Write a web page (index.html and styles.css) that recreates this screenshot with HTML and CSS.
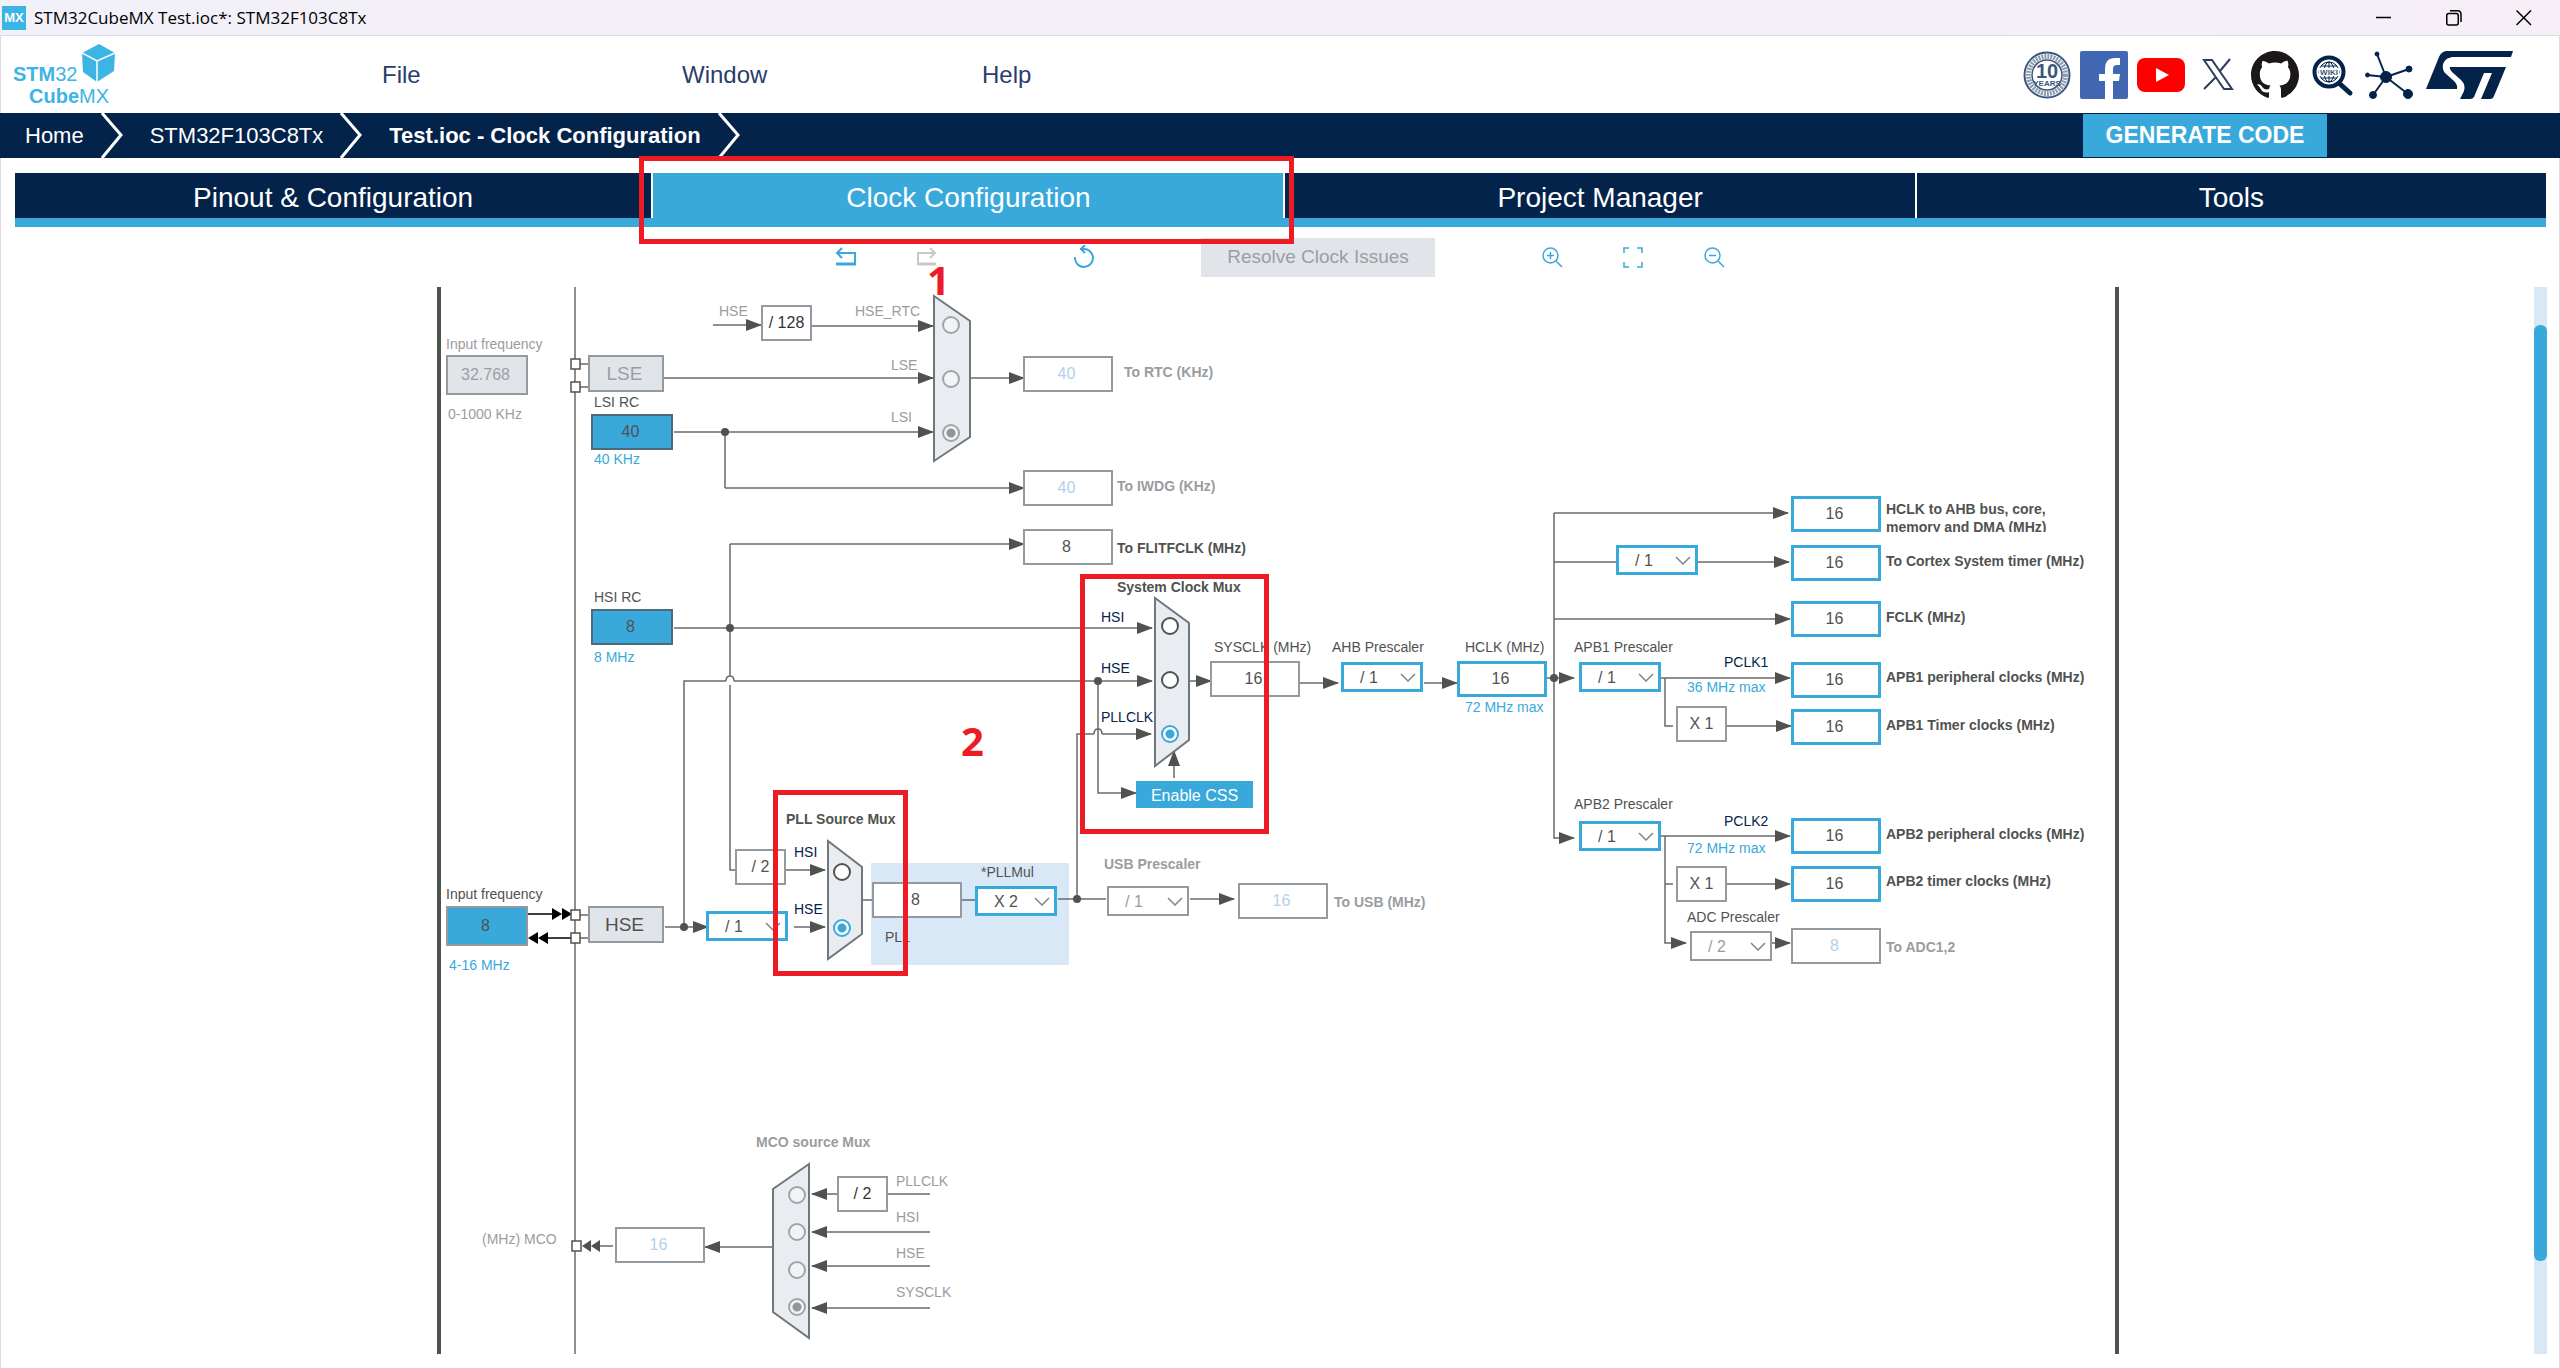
FILE: index.html
```html
<!DOCTYPE html>
<html lang="en">
<head>
<meta charset="utf-8">
<title>STM32CubeMX Test.ioc*: STM32F103C8Tx</title>
<link rel="stylesheet" href="styles.css">
</head>
<body>
<div class="app">
  <header class="titlebar">
    <span class="app-icon">MX</span>
    <span class="app-title">STM32CubeMX Test.ioc*: STM32F103C8Tx</span>
    <div class="window-controls">
      <button type="button" aria-label="Minimize"><svg width="16" height="16" viewBox="0 0 16 16"><path d="M0 7.500H15"/></svg></button>
      <button type="button" aria-label="Restore"><svg width="16" height="16" viewBox="0 0 16 16"><rect x=".75" y="3.500" width="11.500" height="11.500" rx="2"/><path d="M4 .75H11.500Q15 .75 15 4.500V12"/></svg></button>
      <button type="button" aria-label="Close"><svg width="16" height="16" viewBox="0 0 16 16"><path d="M.5 .5L15 15M15 .5L.5 15"/></svg></button>
    </div>
  </header>

  <div class="menubar">
    <div class="logo">
      <span class="logo-top"><b>STM</b>32</span>
      <span class="logo-bottom"><b>Cube</b>MX</span>
      <svg class="logo-cube" width="34" height="38" viewBox="0 0 34 38"><path fill="#3cb4e6" d="M17 0L33 9L32 27L15 38L1 28L0 9Z"/><path d="M0 9L15 17L33 9M15 17V38" fill="none" stroke="#fff" stroke-width="1.500"/></svg>
    </div>
    <nav class="menu" aria-label="Main menu">
      <button type="button">File</button>
      <button type="button">Window</button>
      <button type="button">Help</button>
    </nav>
    <div class="links">
      <a href="#years" aria-label="10 years">
        <svg width="48" height="48" viewBox="0 0 48 48"><circle cx="24" cy="24" r="22.500" fill="none" stroke="#3b577b" stroke-width="2"/><circle cx="24" cy="24" r="18.500" fill="none" stroke="#8a9cb2" stroke-width="5" stroke-dasharray="2 1"/><circle cx="24" cy="24" r="15" fill="#fff" stroke="#3b577b" stroke-width="1.500"/><text x="24" y="27" class="badge-num">10</text><text x="24" y="35" class="badge-word">YEARS</text></svg>
      </a>
      <a href="#facebook" aria-label="Facebook">
        <svg width="48" height="48" viewBox="0 0 48 48"><rect width="48" height="48" rx="2" fill="#4267b2"/><path fill="#fff" d="M25 48V30H19V23H25V18Q25 7 35 7H40V14H37Q33 14 33 18V23H40L39 30H33V48Z"/></svg>
      </a>
      <a href="#youtube" aria-label="YouTube">
        <svg width="48" height="48" viewBox="0 0 48 48"><rect y="7" width="48" height="34" rx="8" fill="#f00"/><path fill="#fff" d="M19 17L32 24L19 31Z"/></svg>
      </a>
      <a href="#x" aria-label="X">
        <svg width="48" height="48" viewBox="0 0 48 48" fill="none" stroke="#2b3f60" stroke-width="2"><path d="M10 9H18L38 38H30ZM36 8L26 20M22 26L10 38"/></svg>
      </a>
      <a href="#github" aria-label="GitHub">
        <svg width="48" height="48" viewBox="0 0 16 16"><path fill="#1b1817" d="M8 0C3.580 0 0 3.580 0 8c0 3.540 2.290 6.530 5.470 7.590.4.070.55-.17.55-.38 0-.19-.01-.82-.01-1.490-2.010.37-2.530-.49-2.690-.94-.09-.23-.48-.94-.82-1.130-.28-.15-.68-.52-.01-.53.63-.01 1.080.58 1.230.82.72 1.210 1.870.87 2.330.66.070-.52.28-.87.51-1.070-1.780-.2-3.640-.89-3.640-3.950 0-.87.31-1.590.82-2.150-.08-.2-.36-1.020.08-2.120 0 0 .67-.21 2.200.82.64-.18 1.320-.27 2-.27s1.360.09 2 .27c1.530-1.040 2.200-.82 2.200-.82.44 1.100.16 1.920.08 2.120.51.56.82 1.270.82 2.150 0 3.070-1.870 3.750-3.650 3.950.29.25.54.73.54 1.480 0 1.070-.01 1.930-.01 2.200 0 .21.15.46.55.38A8.010 8.010 0 0 0 16 8c0-4.420-3.580-8-8-8z"/></svg>
      </a>
      <a href="#wiki" aria-label="Wiki">
        <svg width="48" height="48" viewBox="0 0 48 48" fill="none" stroke="#03234b"><circle cx="21" cy="21" r="14.500" stroke-width="4"/><path stroke-width="5" stroke-linecap="round" d="M32 33L42 42"/><circle cx="21" cy="21" r="10" stroke-width="1"/><ellipse cx="21" cy="21" rx="5" ry="10"/><path d="M21 11V31M13 15H29M13 27H29"/><rect x="11" y="17" width="20" height="8" fill="#fff" stroke="none"/><text x="21" y="24" class="badge-word">WIKI</text></svg>
      </a>
      <a href="#community" aria-label="Community">
        <svg width="48" height="48" viewBox="0 0 48 48" fill="#03234b" stroke="#03234b"><path d="M21 26L12 3M21 26L2 24M21 26L44 18M21 26L8 44M21 26L43 43" stroke-width="2"/><circle cx="21" cy="26" r="5.500"/><circle cx="12" cy="3" r="2"/><circle cx="2.500" cy="24" r="2"/><circle cx="44" cy="18" r="3"/><circle cx="8" cy="44" r="3.500"/><circle cx="43" cy="43" r="4.500"/></svg>
      </a>
      <a class="st" href="#st" aria-label="STMicroelectronics">
        <svg width="88" height="48" viewBox="0 0 88 48" fill="#03234b"><path d="M20 0H87L85 6H28C18 6 14 15 19 22L28 30Q32 34 31 38H0L13 6Q15 1 20 0Z"/><path d="M24 16H80L68 45Q67 48 64 48H55L66 22H58L48 46Q47 48 44 48H34L38 40Q40 34 35 29L26 21Q23 17 24 16Z"/></svg>
      </a>
    </div>
  </div>

  <div class="crumbbar">
    <nav class="crumbs" aria-label="Breadcrumb">
      <a href="#home">Home</a><svg width="22" height="45" viewBox="0 0 22 45"><path d="M1 0L20 22L1 45"/></svg>
      <a href="#mcu">STM32F103C8Tx</a><svg width="22" height="45" viewBox="0 0 22 45"><path d="M1 0L20 22L1 45"/></svg>
      <a class="current" href="#clock">Test.ioc - Clock Configuration</a><svg width="22" height="45" viewBox="0 0 22 45"><path d="M1 0L20 22L1 45"/></svg>
    </nav>
    <button type="button" class="generate">GENERATE CODE</button>
  </div>

  <nav class="tabs" aria-label="Views">
    <button type="button">Pinout &amp; Configuration</button>
    <button type="button" class="active">Clock Configuration<span class="mark mark-tab"></span></button>
    <button type="button">Project Manager</button>
    <button type="button">Tools</button>
  </nav>

  <div class="toolbar">
    <div class="tools">
      <button type="button" aria-label="Undo"><svg width="22" height="24" viewBox="0 0 22 24"><path d="M2 8H20V18" stroke-width="2"/><path d="M1 19H21" stroke-width="3"/><path d="M7 3L2 8L7 13" stroke-width="2"/></svg></button>
      <button type="button" aria-label="Redo" disabled><svg width="22" height="24" viewBox="0 0 22 24"><path d="M19 8H2V18" stroke-width="2"/><path d="M1 19H20" stroke-width="3"/><path d="M14 3L19 8L14 13" stroke-width="2"/></svg></button>
      <button type="button" class="reset" aria-label="Reset"><svg width="22" height="24" viewBox="0 0 22 24"><path d="M2 12A9 9 0 1 0 10 4H7" stroke-width="2"/><path d="M12 0L8 4L12 8" stroke-width="2"/></svg></button>
    </div>
    <button type="button" class="resolve" disabled>Resolve Clock Issues</button>
    <div class="tools">
      <button type="button" aria-label="Zoom in"><svg width="22" height="24" viewBox="0 0 22 24"><circle cx="9.500" cy="10.500" r="7.500"/><path d="M15 16L21 22M6 10.500H13M9.500 7V14"/></svg></button>
      <button type="button" aria-label="Fit"><svg width="22" height="24" viewBox="0 0 22 24"><path d="M2 8V3H7M15 3H20V8M20 17V22H15M7 22H2V17"/></svg></button>
      <button type="button" aria-label="Zoom out"><svg width="22" height="24" viewBox="0 0 22 24"><circle cx="9.500" cy="10.500" r="7.500"/><path d="M15 16L21 22M6 10.500H13"/></svg></button>
    </div>
  </div>

  <main class="workspace">
    <div class="canvas">
      <svg class="wires" width="1760" height="1080" viewBox="0 0 1760 1080">
        <defs>
          <marker id="arrow" markerUnits="userSpaceOnUse" markerWidth="16" markerHeight="12" refX="15" refY="6" orient="auto"><path d="M0 0L16 6L0 12Z" fill="#505250"/></marker>
        </defs>
        <path class="frame" d="M39 7V1074M1717 7V1074"/>
        <rect class="pll" x="471" y="583" width="198" height="102"/>
        <path class="wire" d="M175 7V1074M180 84H188M180 107H188M180 635H188M180 658H188
          M274 152H325M325 152V208M274 348H330M330 264V396M330 405V590H336
          M284 647V401H326M326 401Q326 396 330 396Q334 396 334 401M334 401H698
          M677 619V454H694M694 454Q694 449 698 449Q702 449 702 454
          M462 620H472M561 620H575M658 619H706
          M1154 233V398M1146 398H1154M1154 282H1216
          M1265 398V446H1273M1265 604H1273M1261 556H1265M488 914H530M200 966H213"/>
        <g class="wire arrows">
          <path d="M313 45H361"/><path d="M412 46H533"/><path d="M263 98H533"/><path d="M325 152H533"/>
          <path d="M570 98H624"/><path d="M325 208H624"/><path d="M330 264H624"/>
          <path d="M330 348H752"/><path d="M698 401H752"/><path d="M702 454H751"/><path d="M698 401V513H736"/><path d="M774 498V471"/>
          <path d="M789 401H811"/><path d="M899 403H938"/><path d="M1024 403H1057"/><path d="M790 619H834"/>
          <path d="M1154 233H1388"/><path d="M1298 282H1389"/><path d="M1154 339H1390"/><path d="M1154 398H1174"/>
          <path d="M1261 398H1390"/><path d="M1327 446H1391"/><path d="M1154 398V558H1174"/>
          <path d="M1265 556H1390"/><path d="M1327 604H1390"/><path d="M1265 556V663H1286"/><path d="M1372 663H1390"/>
          <path d="M386 590H425"/><path d="M265 647H308"/><path d="M394 647H425"/>
          <path d="M373 967H305"/><path d="M437 914H412"/><path d="M530 952H412"/><path d="M530 986H412"/><path d="M530 1028H412"/>
        </g>
        <g class="dots"><circle cx="325" cy="152" r="4"/><circle cx="330" cy="348" r="4"/><circle cx="284" cy="647" r="4"/><circle cx="698" cy="401" r="4"/><circle cx="677" cy="619" r="4"/><circle cx="1154" cy="398" r="4"/></g>
        <g class="osc"><path d="M128 634H152M147 658H171"/><path class="head" d="M152 628L162 634L152 640ZM162 628L172 634L162 640ZM138 652L128 658L138 664ZM148 652L138 658L148 664Z"/></g>
        <path class="dots" d="M191 960L182 966L191 972ZM200 960L191 966L200 972Z"/>
        <g class="pins"><rect x="171" y="79" width="9" height="10"/><rect x="171" y="102" width="9" height="10"/><rect x="171" y="630" width="9" height="10"/><rect x="171" y="653" width="9" height="10"/><rect x="172" y="961" width="9" height="10"/></g>
        <g class="muxes">
          <path d="M534 16L570 41V157L534 181Z"/>
          <path d="M755 318L789 343V460L755 486Z"/>
          <path d="M428 561L462 587V654L428 679Z"/>
          <path d="M409 884L373 909V1032L409 1058Z"/>
        </g>
      </svg>

      <!-- low speed sources -->
      <label class="text muted lse-in-label" for="lse-in">Input frequency</label>
      <input class="field source off lse-in" id="lse-in" value="32.768" disabled>
      <span class="text muted lse-range">0-1000 KHz</span>
      <button type="button" class="osc-button lse" disabled>LSE</button>
      <label class="text lsi-label" for="lsi">LSI RC</label>
      <input class="field source lsi" id="lsi" value="40" readonly>
      <span class="text blue lsi-freq">40 KHz</span>

      <!-- RTC mux -->
      <span class="text muted rtc-hse">HSE</span>
      <span class="factor dark div128">/ 128</span>
      <label class="text muted rtc-hse-div" for="rtc1">HSE_RTC</label>
      <label class="text muted rtc-lse" for="rtc2">LSE</label>
      <label class="text muted rtc-lsi" for="rtc3">LSI</label>
      <input type="radio" class="rtc1" id="rtc1" name="rtc" disabled>
      <input type="radio" class="rtc2" id="rtc2" name="rtc" disabled>
      <input type="radio" class="rtc3" id="rtc3" name="rtc" checked disabled>
      <input class="field idle rtc" id="rtc" value="40" disabled>
      <label class="text bold muted rtc-label" for="rtc">To RTC (KHz)</label>
      <input class="field idle iwdg" id="iwdg" value="40" disabled>
      <label class="text bold muted iwdg-label" for="iwdg">To IWDG (KHz)</label>
      <input class="field flitf" id="flitf" value="8" readonly>
      <label class="text bold flitf-label" for="flitf">To FLITFCLK (MHz)</label>

      <!-- high speed sources -->
      <label class="text hsi-label" for="hsi">HSI RC</label>
      <input class="field source hsi" id="hsi" value="8" readonly>
      <span class="text blue hsi-freq">8 MHz</span>
      <label class="text hse-in-label" for="hse-in">Input frequency</label>
      <input class="field source hse-in" id="hse-in" value="8">
      <span class="text blue hse-range">4-16 MHz</span>
      <button type="button" class="osc-button hse">HSE</button>
      <select class="pick hse-div" aria-label="HSE prescaler"><option>/ 1</option></select>
      <span class="factor div2">/ 2</span>

      <!-- PLL -->
      <span class="text bold pll-title">PLL Source Mux</span>
      <label class="text navy pll-hsi" for="pll1">HSI</label>
      <label class="text navy pll-hse" for="pll2">HSE</label>
      <input type="radio" class="pll1" id="pll1" name="pll">
      <input type="radio" class="pll2" id="pll2" name="pll" checked>
      <input class="field pll-in" id="pll-in" value="8" readonly>
      <label class="text pll-mul-label" for="pll-mul">*PLLMul</label>
      <select class="pick pll-mul" id="pll-mul"><option>X 2</option></select>
      <label class="text pll-name" for="pll-in">PLL</label>

      <!-- system clock mux -->
      <span class="text bold sys-title">System Clock Mux</span>
      <label class="text navy sys-hsi" for="sys1">HSI</label>
      <label class="text navy sys-hse" for="sys2">HSE</label>
      <label class="text navy sys-pll" for="sys3">PLLCLK</label>
      <input type="radio" class="sys1" id="sys1" name="sys">
      <input type="radio" class="sys2" id="sys2" name="sys">
      <input type="radio" class="sys3" id="sys3" name="sys" checked>
      <button type="button" class="css-button">Enable CSS</button>
      <label class="text sysclk-label" for="sysclk">SYSCLK (MHz)</label>
      <input class="field sysclk" id="sysclk" value="16" readonly>
      <label class="text ahb-label" for="ahb">AHB Prescaler</label>
      <select class="pick ahb" id="ahb"><option>/ 1</option></select>
      <label class="text hclk-label" for="hclk">HCLK (MHz)</label>
      <input class="field on hclk" id="hclk" value="16">
      <span class="text blue hclk-max">72 MHz max</span>

      <!-- USB -->
      <label class="text bold muted usb-div-label" for="usb-div">USB Prescaler</label>
      <select class="pick usb-div" id="usb-div" disabled><option>/ 1</option></select>
      <input class="field idle usb" id="usb" value="16" disabled>
      <label class="text bold muted usb-label" for="usb">To USB (MHz)</label>

      <!-- core outputs -->
      <input class="field on out ahb-bus" id="ahb-bus" value="16">
      <label class="text bold out-label ahb-bus-label" for="ahb-bus">HCLK to AHB bus, core,<br>memory and DMA (MHz)</label>
      <select class="pick cortex-div" aria-label="Cortex prescaler"><option>/ 1</option></select>
      <input class="field on out cortex" id="cortex" value="16">
      <label class="text bold out-label cortex-label" for="cortex">To Cortex System timer (MHz)</label>
      <input class="field on out fclk" id="fclk" value="16">
      <label class="text bold out-label fclk-label" for="fclk">FCLK (MHz)</label>

      <!-- APB1 -->
      <label class="text apb1-label" for="apb1">APB1 Prescaler</label>
      <select class="pick apb1" id="apb1"><option>/ 1</option></select>
      <span class="text navy pclk1">PCLK1</span>
      <span class="text blue pclk1-max">36 MHz max</span>
      <span class="factor x1-apb1">X 1</span>
      <input class="field on out apb1-per" id="apb1-per" value="16">
      <label class="text bold out-label apb1-per-label" for="apb1-per">APB1 peripheral clocks (MHz)</label>
      <input class="field on out apb1-tim" id="apb1-tim" value="16">
      <label class="text bold out-label apb1-tim-label" for="apb1-tim">APB1 Timer clocks (MHz)</label>

      <!-- APB2 -->
      <label class="text apb2-label" for="apb2">APB2 Prescaler</label>
      <select class="pick apb2" id="apb2"><option>/ 1</option></select>
      <span class="text navy pclk2">PCLK2</span>
      <span class="text blue pclk2-max">72 MHz max</span>
      <span class="factor x1-apb2">X 1</span>
      <input class="field on out apb2-per" id="apb2-per" value="16">
      <label class="text bold out-label apb2-per-label" for="apb2-per">APB2 peripheral clocks (MHz)</label>
      <input class="field on out apb2-tim" id="apb2-tim" value="16">
      <label class="text bold out-label apb2-tim-label" for="apb2-tim">APB2 timer clocks (MHz)</label>
      <label class="text adc-div-label" for="adc-div">ADC Prescaler</label>
      <select class="pick adc-div" id="adc-div" disabled><option>/ 2</option></select>
      <input class="field idle out adc" id="adc" value="8" disabled>
      <label class="text bold muted out-label adc-label" for="adc">To ADC1,2</label>

      <!-- MCO -->
      <span class="text bold muted mco-title">MCO source Mux</span>
      <label class="text muted mco-label" for="mco">(MHz) MCO</label>
      <input class="field idle mco" id="mco" value="16" disabled>
      <input type="radio" class="mco1" id="mco1" name="mco" disabled>
      <input type="radio" class="mco2" id="mco2" name="mco" disabled>
      <input type="radio" class="mco3" id="mco3" name="mco" disabled>
      <input type="radio" class="mco4" id="mco4" name="mco" checked disabled>
      <span class="factor dark mco-div">/ 2</span>
      <label class="text muted mco-in mco-pll" for="mco1">PLLCLK</label>
      <label class="text muted mco-in mco-hsi" for="mco2">HSI</label>
      <label class="text muted mco-in mco-hse" for="mco3">HSE</label>
      <label class="text muted mco-in mco-sys" for="mco4">SYSCLK</label>

      <span class="mark mark-pll"></span>
      <span class="mark mark-sys"></span>
      <span class="step step1">1</span>
      <span class="step step2">2</span>
    </div>
    <div class="scrollbar"><div class="thumb"></div></div>
  </main>
</div>
</body>
</html>
```
FILE: styles.css
```css
* { box-sizing: border-box; }

:root {
  --navy: #03234b;
  --sky: #39a9dc;
  --ink: #505250;
  --muted: #9a9c9f;
  --line: #939ba1;
  --red: #ed1c24;
}

body {
  margin: 0;
  background: #fff;
  color: var(--ink);
  font-family: "Liberation Sans", Arial, sans-serif;
}

button, input, select { font-family: inherit; margin: 0; border-radius: 0; }
button { border: 0; background: none; padding: 0; color: inherit; cursor: pointer; }
svg { display: block; }
a { color: inherit; text-decoration: none; }

.app {
  min-width: 1800px;
  min-height: 100vh;
  box-shadow: inset 1px 0 #dcdce0, inset -1px 0 #dcdce0;
}

/* title bar */
.titlebar {
  display: flex;
  align-items: center;
  height: 36px;
  padding: 0 28px 0 2px;
  background: linear-gradient(90deg, #f2f0f8, #f6eff7);
  border-bottom: 1px solid #dddce2;
  color: #000;
}
.app-icon {
  width: 24px;
  height: 24px;
  background: #3cb4e6;
  color: #fff;
  font-size: 13px;
  font-weight: bold;
  line-height: 24px;
  text-align: center;
}
.app-title { margin-left: 8px; font-family: "Open Sans", "Noto Sans", sans-serif; font-size: 17px; }
.window-controls { display: flex; gap: 54px; margin-left: auto; }
.window-controls svg { fill: none; stroke: #000; stroke-width: 1.500; }

/* menu bar */
.menubar { display: flex; align-items: center; height: 77px; padding: 0 46px 0 13px; }
.logo {
  position: relative;
  width: 369px;
  height: 64px;
  padding-top: 20px;
  color: #3cb4e6;
  font-size: 20px;
  line-height: 22px;
}
.logo span { display: block; }
.logo-bottom { padding-left: 16px; }
.logo-cube { position: absolute; left: 69px; top: 1px; }
.menu { display: flex; color: #2b3d6b; }
.menu button { width: 300px; font-size: 24px; line-height: 28px; text-align: left; }
.links { display: flex; gap: 9px; margin-left: auto; }
.links .st { margin-left: 4px; }
.badge-num { font: bold 20px "Liberation Sans", sans-serif; fill: #3b577b; text-anchor: middle; stroke: none; }
.badge-word { font: bold 8px "Liberation Sans", sans-serif; fill: #3b577b; text-anchor: middle; stroke: none; }

/* breadcrumbs */
.crumbbar {
  display: flex;
  justify-content: space-between;
  align-items: center;
  height: 45px;
  padding: 0 233px 0 25px;
  background: var(--navy);
  color: #fff;
  font-size: 22px;
}
.crumbs { display: flex; align-items: center; }
.crumbs svg { margin: 0 27px 0 17px; fill: none; stroke: #fff; stroke-width: 3; }
.crumbs a { padding-top: 1px; }
.crumbs .current { font-weight: bold; }
.generate { width: 244px; height: 43px; background: var(--sky); color: #fff; font-size: 23px; font-weight: bold; }

/* view tabs */
.tabs {
  display: grid;
  grid-template-columns: 637fr 631fr 630fr 630fr;
  gap: 2px;
  margin: 15px 14px 0 15px;
  background: linear-gradient(#fff 45px, var(--sky) 45px);
  padding-bottom: 9px;
}
.tabs button { height: 45px; padding-top: 4px; background: var(--navy); color: #fff; font-size: 28px; }
.tabs .active { position: relative; height: 54px; margin-bottom: -9px; padding-bottom: 9px; background: var(--sky); }

/* red review marks */
.mark { position: absolute; z-index: 2; border: 5px solid var(--red); pointer-events: none; }
.mark-tab { inset: -17px -11px -17px -14px; }
.mark-pll { left: 373px; top: 510px; width: 135px; height: 186px; }
.mark-sys { left: 680px; top: 294px; width: 189px; height: 260px; }
.step { position: absolute; color: var(--red); font: bold 40px/40px "Open Sans", "Noto Sans", sans-serif; }
.step1 { left: 527px; top: -20px; }
.step2 { left: 561px; top: 441px; }

/* toolbar */
.toolbar { display: flex; justify-content: center; align-items: center; gap: 106px; height: 53px; padding-top: 7px; }
.tools { display: flex; gap: 59px; }
.tools svg { fill: none; stroke: var(--sky); stroke-width: 1.500; }
.tools button:disabled svg { stroke: #c9c9c9; }
.tools .reset { margin-left: 76px; }
.resolve { width: 234px; height: 39px; background: #e1e5e9; color: #9a9fa4; font-size: 19px; }

/* workspace */
.workspace { position: relative; display: flex; justify-content: center; }
.canvas { position: relative; width: 1760px; height: 1080px; }
.canvas > * { position: absolute; }
.wires { left: 0; top: 0; }
.scrollbar { position: absolute; right: 13px; top: 7px; bottom: 6px; width: 13px; padding-top: 38px; background: #d9e8f6; }
.thumb { height: 91%; border-radius: 6px; background: var(--sky); }

.frame { stroke: var(--ink); stroke-width: 4; }
.wire { fill: none; stroke: #686a68; stroke-width: 1.500; }
.arrows path { marker-end: url(#arrow); }
.dots { fill: var(--ink); }
.osc { stroke: #000; stroke-width: 1.500; }
.osc .head { stroke: none; }
.pins { fill: #fff; stroke: #505250; stroke-width: 1.500; }
.muxes { fill: #e9edf1; stroke: #6f777d; stroke-width: 2; }
.pll { fill: #d9e8f6; }

.text { font-size: 14px; line-height: 18px; white-space: nowrap; }
.bold { font-weight: bold; }
.muted { color: var(--muted); }
.blue { color: var(--sky); }
.navy { color: var(--navy); }

.field {
  width: 90px;
  height: 36px;
  padding: 0 3px 0 0;
  border: 2px solid var(--line);
  background: #fff;
  color: var(--ink);
  font-size: 16px;
  text-align: center;
}
.field.on { border: 3px solid var(--sky); }
.field.idle { color: #b5d0ea; }
.source { width: 82px; border-color: #50697a; background: var(--sky); }
.source.off { border-color: var(--line); background: #e1e5e9; color: #9a9fa4; }

.pick {
  width: 82px;
  height: 30px;
  padding: 0 0 0 16px;
  border: 3px solid var(--sky);
  appearance: none;
  color: var(--ink);
  font-size: 16px;
  background: #fff url("data:image/svg+xml,%3Csvg xmlns='http://www.w3.org/2000/svg' width='16' height='9'%3E%3Cpath d='M1 1L8 8L15 1' fill='none' stroke='%23808488' stroke-width='1.500'/%3E%3C/svg%3E") no-repeat right 4px center;
}
.pick:disabled { border: 2px solid var(--line); color: var(--muted); opacity: 1; }

.factor {
  width: 51px;
  height: 36px;
  border: 2px solid var(--line);
  background: #fff;
  font-size: 16px;
  line-height: 32px;
  text-align: center;
}
.dark { color: #333; }

.osc-button { width: 76px; height: 37px; padding-right: 3px; border: 2px solid var(--line); background: #e1e5e9; font-size: 19px; color: var(--ink); }
.osc-button:disabled { color: #9a9fa4; }
.css-button { left: 736px; top: 501px; width: 117px; height: 27px; padding-top: 2px; background: var(--sky); color: #fff; font-size: 16px; }

input[type="radio"] {
  appearance: none;
  width: 18px;
  height: 18px;
  border: 2px solid var(--ink);
  border-radius: 50%;
  background: #fff;
}
input[type="radio"]:checked { border-color: var(--sky); background: radial-gradient(circle, var(--sky) 4px, #fff 5px); }
input[type="radio"]:disabled { border-color: #a0a4a8; background: #f2f3f4; }
input[type="radio"]:disabled:checked { background: radial-gradient(circle, #8f979d 4px, #f2f3f4 5px); }

/* places on the drawing sheet */
.lse-in-label { left: 46px; top: 55px; }
.lse-in { left: 46px; top: 75px; height: 40px; }
.lse-range { left: 48px; top: 125px; }
.lse { left: 188px; top: 75px; }
.lsi-label { left: 194px; top: 113px; }
.lsi { left: 191px; top: 134px; }
.lsi-freq { left: 194px; top: 170px; }

.rtc-hse { left: 319px; top: 22px; }
.div128 { left: 361px; top: 25px; }
.rtc-hse-div { left: 455px; top: 22px; }
.rtc-lse { left: 491px; top: 76px; }
.rtc-lsi { left: 491px; top: 128px; }
.rtc1, .rtc2, .rtc3 { left: 542px; }
.rtc1 { top: 36px; }
.rtc2 { top: 90px; }
.rtc3 { top: 144px; }
.rtc, .iwdg, .flitf { left: 623px; }
.rtc { top: 76px; }
.iwdg { top: 190px; }
.flitf { top: 249px; }
.rtc-label { left: 724px; top: 83px; }
.iwdg-label { left: 717px; top: 197px; }
.flitf-label { left: 717px; top: 259px; }

.hsi-label { left: 194px; top: 308px; }
.hsi { left: 191px; top: 329px; }
.hsi-freq { left: 194px; top: 368px; }
.hse-in-label { left: 46px; top: 605px; }
.hse-in { left: 46px; top: 626px; height: 40px; border-color: var(--line); }
.hse-range { left: 49px; top: 676px; }
.hse { left: 188px; top: 626px; }
.hse-div { left: 306px; top: 631px; }
.div2 { left: 335px; top: 569px; }

.pll-title { left: 386px; top: 530px; }
.pll-hsi { left: 394px; top: 563px; }
.pll-hse { left: 394px; top: 620px; }
.pll1, .pll2 { left: 433px; }
.pll1 { top: 583px; }
.pll2 { top: 639px; }
.pll-in { left: 472px; top: 602px; }
.pll-mul-label { left: 581px; top: 583px; }
.pll-mul { left: 575px; top: 606px; }
.pll-name { left: 485px; top: 648px; }

.sys-title { left: 717px; top: 298px; }
.sys-hsi, .sys-hse, .sys-pll { left: 701px; }
.sys-hsi { top: 328px; }
.sys-hse { top: 379px; }
.sys-pll { top: 428px; }
.sys1, .sys2, .sys3 { left: 761px; }
.sys1 { top: 337px; }
.sys2 { top: 391px; }
.sys3 { top: 445px; }
.sysclk-label { left: 814px; top: 358px; }
.sysclk { left: 810px; top: 381px; }
.ahb-label { left: 932px; top: 358px; }
.ahb { left: 941px; top: 382px; }
.hclk-label { left: 1065px; top: 358px; }
.hclk { left: 1057px; top: 381px; }
.hclk-max { left: 1065px; top: 418px; }

.usb-div-label { left: 704px; top: 575px; }
.usb-div { left: 707px; top: 606px; }
.usb { left: 838px; top: 603px; }
.usb-label { left: 934px; top: 613px; }

.out { left: 1391px; }
.out-label { left: 1486px; }
.ahb-bus { top: 216px; }
.ahb-bus-label { top: 220px; height: 32px; overflow: hidden; }
.cortex-div { left: 1216px; top: 265px; }
.cortex { top: 265px; }
.cortex-label { top: 272px; }
.fclk { top: 321px; }
.fclk-label { top: 328px; }

.apb1-label, .apb2-label { left: 1174px; }
.apb1, .apb2 { left: 1179px; }
.pclk1, .pclk2 { left: 1324px; }
.pclk1-max, .pclk2-max, .adc-div-label { left: 1287px; }
.x1-apb1, .x1-apb2 { left: 1276px; }
.apb1-label { top: 358px; }
.apb1 { top: 382px; }
.pclk1 { top: 373px; }
.pclk1-max { top: 398px; }
.x1-apb1 { top: 426px; }
.apb1-per { top: 382px; }
.apb1-per-label { top: 388px; }
.apb1-tim { top: 429px; }
.apb1-tim-label { top: 436px; }
.apb2-label { top: 515px; }
.apb2 { top: 541px; }
.pclk2 { top: 532px; }
.pclk2-max { top: 559px; }
.x1-apb2 { top: 586px; }
.apb2-per { top: 538px; }
.apb2-per-label { top: 545px; }
.apb2-tim { top: 586px; }
.apb2-tim-label { top: 592px; }
.adc-div-label { top: 628px; }
.adc-div { left: 1290px; top: 651px; }
.adc { top: 648px; }
.adc-label { top: 658px; }

.mco-title { left: 356px; top: 853px; }
.mco-label { left: 82px; top: 950px; }
.mco { left: 215px; top: 947px; }
.mco1, .mco2, .mco3, .mco4 { left: 388px; }
.mco1 { top: 906px; }
.mco2 { top: 943px; }
.mco3 { top: 981px; }
.mco4 { top: 1018px; }
.mco-div { left: 437px; top: 896px; }
.mco-in { left: 496px; }
.mco-pll { top: 892px; }
.mco-hsi { top: 928px; }
.mco-hse { top: 964px; }
.mco-sys { top: 1003px; }
```
